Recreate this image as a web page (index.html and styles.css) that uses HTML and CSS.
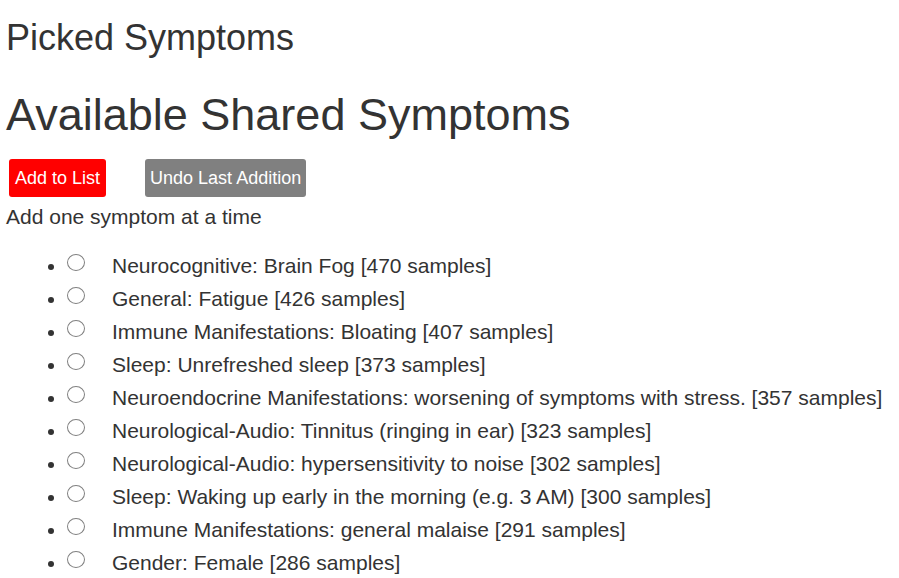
FILE: index.html
```html
<!DOCTYPE html>
<html>

<head>
    <title>Shared Symptoms</title>
    <link rel="stylesheet" href="styles.css">
</head>

<body>
    <h3 class="picked-title">Picked Symptoms</h3>
    <div id="picked-list"></div>

    <h1 class="available-title">Available Shared Symptoms</h1>

    <div class="actions">
        <button id="add-button" class="btn btn-add" type="button">Add to List</button>
        <button id="undo-button" class="btn btn-undo" type="button">Undo Last Addition</button>
    </div>
    <p class="hint">Add one symptom at a time</p>

    <ul class="symptoms">
        <li><input type="radio" name="symptom" id="s1"><label for="s1">Neurocognitive: Brain Fog [470 samples]</label></li>
        <li><input type="radio" name="symptom" id="s2"><label for="s2">General: Fatigue [426 samples]</label></li>
        <li><input type="radio" name="symptom" id="s3"><label for="s3">Immune Manifestations: Bloating [407 samples]</label></li>
        <li><input type="radio" name="symptom" id="s4"><label for="s4">Sleep: Unrefreshed sleep [373 samples]</label></li>
        <li><input type="radio" name="symptom" id="s5"><label for="s5">Neuroendocrine Manifestations: worsening of symptoms with stress. [357 samples]</label></li>
        <li><input type="radio" name="symptom" id="s6"><label for="s6">Neurological-Audio: Tinnitus (ringing in ear) [323 samples]</label></li>
        <li><input type="radio" name="symptom" id="s7"><label for="s7">Neurological-Audio: hypersensitivity to noise [302 samples]</label></li>
        <li><input type="radio" name="symptom" id="s8"><label for="s8">Sleep: Waking up early in the morning (e.g. 3 AM) [300 samples]</label></li>
        <li><input type="radio" name="symptom" id="s9"><label for="s9">Immune Manifestations: general malaise [291 samples]</label></li>
        <li><input type="radio" name="symptom" id="s10"><label for="s10">Gender: Female [286 samples]</label></li>
    </ul>
</body>

</html>
```

FILE: styles.css
```css
body {
    font-family: "Liberation Sans", Arial, sans-serif;
    font-size: 21px;
    color: #333;
    margin: 0;
    padding: 0 6px;
}

h1,
h3 {
    font-weight: normal;
    line-height: 1.1;
    margin: 0;
}

.picked-title {
    font-size: 36px;
    margin-top: 18px;
}

.available-title {
    font-size: 45px;
    margin-top: 32px;
}

.actions {
    display: flex;
    gap: 39px;
    margin-top: 20px;
    padding-left: 3px;
}

.btn {
    font-family: "Liberation Sans", Arial, sans-serif;
    font-size: 18px;
    line-height: 22px;
    padding: 8px 5px;
    color: #fff;
    border: none;
    border-radius: 3px;
    cursor: pointer;
}

.btn-add {
    background-color: #ff0000;
    padding: 8px 6px;
}

.btn-undo {
    background-color: #808080;
}

.hint {
    line-height: 30px;
    margin: 5px 0 0 0;
}

.symptoms {
    margin: 17px 0 0 0;
    padding-left: 61px;
}

.symptoms li {
    line-height: 33px;
}

.symptoms input {
    appearance: none;
    -webkit-appearance: none;
    box-sizing: border-box;
    width: 18px;
    height: 17px;
    margin: 0 0 2px 0;
    border: 1px solid #808080;
    border-radius: 50%;
    background-color: #fff;
    vertical-align: baseline;
}

.symptoms input:checked {
    border: 5px solid #0075ff;
}

.symptoms label {
    padding-left: 27px;
}
```
